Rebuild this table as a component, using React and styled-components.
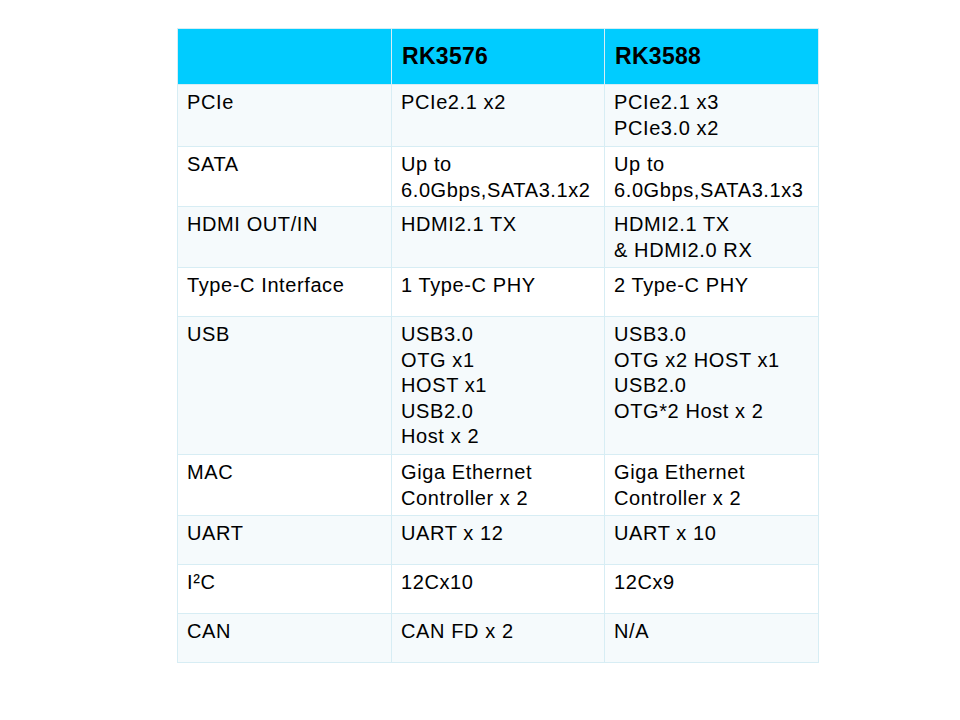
import React from "react";
import styled, { createGlobalStyle } from "styled-components";

const Global = createGlobalStyle`
  html, body { margin: 0; padding: 0; background: #ffffff; }
  body { font-family: "Liberation Sans", Arial, sans-serif; color: #000; }
`;

const Page = styled.div`
  width: 960px;
  height: 720px;
  box-sizing: border-box;
  padding: 28px 0 0 177px;
`;

const Table = styled.table`
  border-collapse: collapse;
  table-layout: fixed;
  width: 641px;
`;

const Col = styled.col`
  width: ${(p) => p.$w}px;
`;

const HeadRow = styled.tr`
  height: 56px;
  background: #00ccff;
`;

const HeadCell = styled.th`
  border: 1px solid #d7edf4;
  padding: 0 9px 1px 10px;
  text-align: left;
  vertical-align: middle;
  font-size: 23px;
  font-weight: 700;
  line-height: 26px;
  letter-spacing: 0.3px;
  color: #000;
`;

const Row = styled.tr`
  height: ${(p) => p.$h}px;
  background: ${(p) => (p.$shade ? "#f5fafc" : "#ffffff")};
`;

const Cell = styled.td`
  border: 1px solid #d7edf4;
  padding: 5px 9px 0 9px;
  vertical-align: top;
  font-size: 20px;
  line-height: 25.5px;
  letter-spacing: 0.6px;
  color: #000;
  white-space: nowrap;
`;

const rows = [
  { h: 62, a: ["PCIe"], b: ["PCIe2.1 x2"], c: ["PCIe2.1 x3", "PCIe3.0 x2"] },
  { h: 60, a: ["SATA"], b: ["Up to", "6.0Gbps,SATA3.1x2"], c: ["Up to", "6.0Gbps,SATA3.1x3"] },
  { h: 61, a: ["HDMI OUT/IN"], b: ["HDMI2.1 TX"], c: ["HDMI2.1 TX", "& HDMI2.0 RX"] },
  { h: 49, a: ["Type-C Interface"], b: ["1 Type-C PHY"], c: ["2 Type-C PHY"] },
  {
    h: 138,
    a: ["USB"],
    b: ["USB3.0", "OTG x1", "HOST x1", "USB2.0", "Host x 2"],
    c: ["USB3.0", "OTG x2 HOST x1", "USB2.0", "OTG*2 Host x 2"],
  },
  { h: 61, a: ["MAC"], b: ["Giga Ethernet", "Controller x 2"], c: ["Giga Ethernet", "Controller x 2"] },
  { h: 49, a: ["UART"], b: ["UART x 12"], c: ["UART x 10"] },
  { h: 49, a: ["I²C"], b: ["12Cx10"], c: ["12Cx9"] },
  { h: 49, a: ["CAN"], b: ["CAN FD x 2"], c: ["N/A"] },
];

function Lines({ items }) {
  return items.map((t, i) => (
    <React.Fragment key={i}>
      {i > 0 && <br />}
      {t}
    </React.Fragment>
  ));
}

export default function App() {
  return (
    <Page>
      <Global />
      <Table>
        <colgroup>
          <Col $w={214} />
          <Col $w={213} />
          <Col $w={214} />
        </colgroup>
        <thead>
          <HeadRow>
            <HeadCell></HeadCell>
            <HeadCell>RK3576</HeadCell>
            <HeadCell>RK3588</HeadCell>
          </HeadRow>
        </thead>
        <tbody>
          {rows.map((r, i) => (
            <Row key={i} $h={r.h} $shade={i % 2 === 0}>
              <Cell>
                <Lines items={r.a} />
              </Cell>
              <Cell>
                <Lines items={r.b} />
              </Cell>
              <Cell>
                <Lines items={r.c} />
              </Cell>
            </Row>
          ))}
        </tbody>
      </Table>
    </Page>
  );
}
